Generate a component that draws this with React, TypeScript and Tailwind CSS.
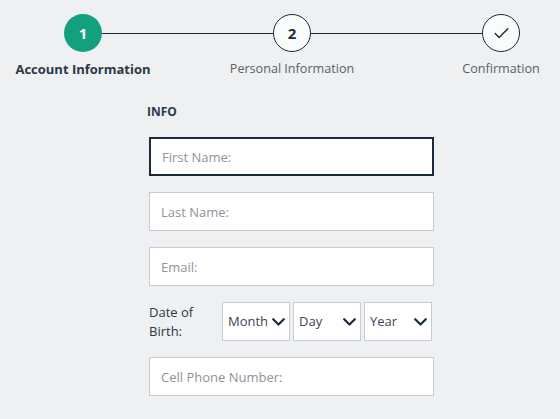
import React from 'react';
import { Check } from 'lucide-react';

const font = { fontFamily: '"Open Sans", "Noto Sans", sans-serif' };

function Step({ label, active, children }: { label: string; active?: boolean; children: React.ReactNode }) {
  return (
    <div className="flex flex-col items-center w-[38px] shrink-0">
      <div
        className={`w-[38px] h-[38px] rounded-full flex items-center justify-center text-[15px] font-bold ${
          active ? 'bg-[#13a07d] text-white' : 'bg-[#fafbfb] border-[1.5px] border-[#1b2a3d] text-[#1b2a3d]'
        }`}
      >
        {children}
      </div>
      <span
        className={`mt-[8px] whitespace-nowrap leading-[18px] ${
          active ? 'text-[13px] font-bold text-[#2a3848]' : 'text-[12.6px] text-[#5a6068]'
        }`}
      >
        {label}
      </span>
    </div>
  );
}

function Field({ placeholder, focused }: { placeholder: string; focused?: boolean }) {
  return (
    <input
      placeholder={placeholder}
      autoFocus={focused}
      className={`w-full h-[39px] bg-white outline-none text-[13px] text-[#2a3848] placeholder:text-[#8e939a] pl-[11px] ${
        focused ? 'border-2 border-[#1b2a3d]' : 'border border-[#c6cbd6]'
      }`}
      style={font}
    />
  );
}

function FakeSelect({ label }: { label: string }) {
  return (
    <div className="w-[68px] h-[39px] bg-white border border-[#c6cbd6] flex items-center justify-between pl-[5px] pr-[4px]">
      <span className="text-[13px] text-[#3a4656]">{label}</span>
      <svg width="13" height="8" viewBox="0 0 13 8" fill="none" className="text-[#1b2a3d]">
        <polyline points="1.2,1.2 6.5,6.5 11.8,1.2" stroke="currentColor" strokeWidth="2.2" strokeLinecap="round" strokeLinejoin="round" />
      </svg>
    </div>
  );
}

export default function App() {
  return (
    <div className="w-[560px] h-[419px] bg-[#eef0f1] overflow-hidden" style={font}>
      <div className="flex items-start pt-[14px] pl-[64px] pr-[40px]">
        <Step label="Account Information" active>
          1
        </Step>
        <div className="flex-1 h-px bg-[#1b2a3d] mt-[19px]" />
        <Step label="Personal Information">2</Step>
        <div className="flex-1 h-px bg-[#1b2a3d] mt-[19px]" />
        <Step label="Confirmation">
          <Check className="w-[19px] h-[19px]" strokeWidth={1.75} />
        </Step>
      </div>

      <div className="ml-[149px] w-[285px] mt-[26px]">
        <p className="-ml-[2px] text-[12px] leading-[16px] font-bold text-[#2c3a4a]">INFO</p>
        <div className="mt-[17px] flex flex-col gap-[16px]">
          <Field placeholder="First Name:" focused />
          <Field placeholder="Last Name:" />
          <Field placeholder="Email:" />
          <div className="flex items-center h-[39px]">
            <span className="w-[73px] text-[13px] leading-[19px] text-[#2a3848]">
              Date of
              <br />
              Birth:
            </span>
            <div className="flex gap-[3px]">
              <FakeSelect label="Month" />
              <FakeSelect label="Day" />
              <FakeSelect label="Year" />
            </div>
          </div>
          <Field placeholder="Cell Phone Number:" />
        </div>
      </div>
    </div>
  );
}
